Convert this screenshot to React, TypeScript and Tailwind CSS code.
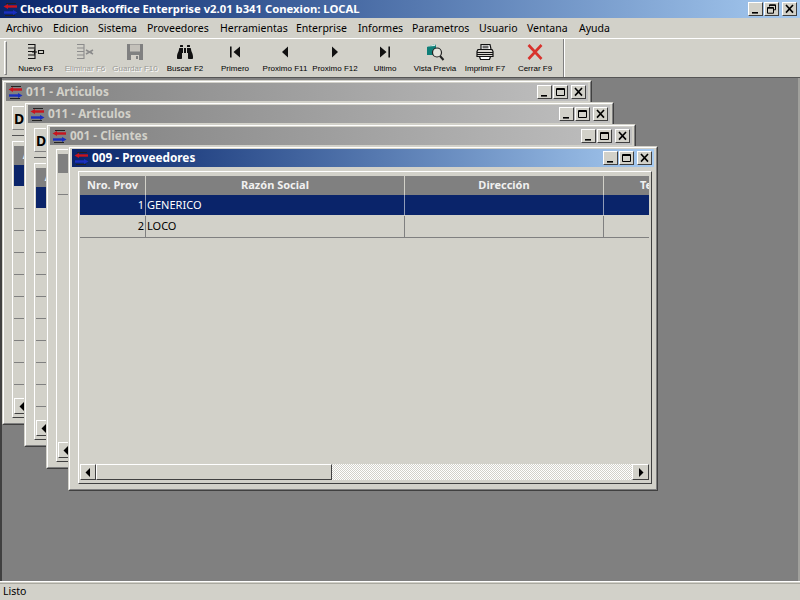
import React from 'react';
import { FaBinoculars } from 'react-icons/fa';

const raised = 'border border-t-white border-l-white border-r-[#404040] border-b-[#404040] bg-[#d2d1c9]';

function AppIcon() {
  return (
    <svg width="15" height="13" viewBox="0 0 15 13" className="shrink-0">
      <path d="M3 0.500h10M2 12.500h10" stroke="#222" strokeWidth="1" />
      <path d="M4 3.500h10" stroke="#c8141e" strokeWidth="2.400" />
      <path d="M5 1v5L0.500 3.500z" fill="#c8141e" />
      <path d="M1 9.500h10" stroke="#1a2fc0" strokeWidth="2.400" />
      <path d="M10 7v5l4.500-2.500z" fill="#1a2fc0" />
    </svg>
  );
}

function CtlGlyph({ kind }: { kind: string }) {
  return (
    <svg width="11" height="10" viewBox="0 0 11 10">
      {kind === 'min' && <path d="M2 8h6v1.600H2z" fill="#000" />}
      {kind === 'max' && <path d="M1.500 1.500h8v7h-8zM1.500 2.500h8" fill="none" stroke="#000" />}
      {kind === 'restore' && <path d="M3.500 2.500V.8h6v5H8M1.500 3.500h6v5.700h-6zM1.500 4.200h6M3.500 1.400h6" fill="none" stroke="#000" />}
      {kind === 'close' && <path d="M2 1l7 7.600M9 1L2 8.600" fill="none" stroke="#000" strokeWidth="1.600" />}
    </svg>
  );
}

function Ctl({ kind, gap }: { kind: string; gap: string }) {
  return (
    <div className={`${raised} ${gap} flex h-[14px] w-[15px] shrink-0 items-center justify-center`}>
      <CtlGlyph kind={kind} />
    </div>
  );
}

// iconos de la barra, dibujados a mano en 20x18
function Tree({ color, del }: { color: string; del?: boolean }) {
  return (
    <svg width="20" height="18" viewBox="0 0 20 18">
      <path d="M2 1.500h7v14H2M2 5h7M2 8.500h7M2 12h7" fill="none" stroke={color} strokeWidth="1.100" />
      {del ? (
        <path d="M11 7l7 4M11 11l7-4M13 9h4" fill="none" stroke={color} strokeWidth="1.500" />
      ) : (
        <path d="M6 9h5M8.500 6.500v5M12.500 7.500h5v3h-5z" fill="none" stroke={color} strokeWidth="1.100" />
      )}
    </svg>
  );
}

function Floppy() {
  return (
    <svg width="20" height="18" viewBox="0 0 20 18">
      <path d="M2 1h16v16H2z" fill="#808080" />
      <path d="M5 1.500h10v7H5z" fill="#c4c1ba" />
      <path d="M6 12h8v5H6z" fill="#d4d0c8" />
      <path d="M11 13h2v3h-2z" fill="#808080" />
    </svg>
  );
}

function Nav({ kind }: { kind: string }) {
  return (
    <svg width="20" height="18" viewBox="0 0 20 18">
      {kind === 'first' && <path d="M5 3.500h1.600v11H5zM15 3.500v11L8.500 9z" fill="#111" />}
      {kind === 'prev' && <path d="M13 3.500v11L7 9z" fill="#111" />}
      {kind === 'next' && <path d="M7 3.500v11L13 9z" fill="#111" />}
      {kind === 'last' && <path d="M5 3.500v11L11.500 9zM13.400 3.500H15v11h-1.600z" fill="#111" />}
    </svg>
  );
}

function Preview() {
  return (
    <svg width="20" height="18" viewBox="0 0 20 18">
      <path d="M2 4l8-3 1 2v9H2z" fill="#0f7f78" />
      <path d="M3 3.500l7-2.500v2z" fill="#d8e8e4" />
      <circle cx="12" cy="9.500" r="4.500" fill="#e4e4dc" stroke="#222" strokeWidth="1.200" />
      <path d="M15 13l3.500 4" stroke="#222" strokeWidth="2" />
    </svg>
  );
}

function Printer() {
  return (
    <svg width="20" height="18" viewBox="0 0 20 18">
      <path d="M6 6V1.500h9L16 6" fill="#fff" stroke="#111" strokeWidth="1.200" />
      <path d="M7.500 3.200h6M7.500 4.800h6" stroke="#111" strokeWidth="0.900" />
      <path d="M3 6.500h14l1 2v5H2v-5z" fill="#d8d5ce" stroke="#111" strokeWidth="1.200" />
      <path d="M2 9.500h16M2 11.500h16" stroke="#111" strokeWidth="1" />
      <path d="M4.500 13.500h11l-1 3h-9z" fill="#fff" stroke="#111" strokeWidth="1.200" />
    </svg>
  );
}

function CloseX() {
  return (
    <svg width="20" height="18" viewBox="0 0 20 18">
      <path d="M3.500 2l13 14M16.500 2l-13 14" stroke="#d8322c" strokeWidth="2.600" fill="none" />
    </svg>
  );
}

const tools = [
  { label: 'Nuevo F3', icon: <Tree color="#111" />, w: 'w-[49px]' },
  { label: 'Eliminar F6', icon: <Tree color="#8c8c8c" del />, off: true, w: 'w-[50px]' },
  { label: 'Guardar F10', icon: <Floppy />, off: true, w: 'w-[50px]' },
  { label: 'Buscar F2', icon: <FaBinoculars size={16} color="#111" />, w: 'w-[50px]' },
  { label: 'Primero', icon: <Nav kind="first" />, w: 'w-[50px]' },
  { label: 'Proximo F11', icon: <Nav kind="prev" />, w: 'w-[50px]' },
  { label: 'Proximo F12', icon: <Nav kind="next" />, w: 'w-[50px]' },
  { label: 'Ultimo', icon: <Nav kind="last" />, w: 'w-[50px]' },
  { label: 'Vista Previa', icon: <Preview />, w: 'w-[50px]' },
  { label: 'Imprimir F7', icon: <Printer />, w: 'w-[50px]' },
  { label: 'Cerrar F9', icon: <CloseX />, w: 'w-[50px]' },
];

const menus = [
  { label: 'Archivo', w: 'w-[47px]' },
  { label: 'Edicion', w: 'w-[45px]' },
  { label: 'Sistema', w: 'w-[49px]' },
  { label: 'Proveedores', w: 'w-[73px]' },
  { label: 'Herramientas', w: 'w-[76px]' },
  { label: 'Enterprise', w: 'w-[62px]' },
  { label: 'Informes', w: 'w-[54px]' },
  { label: 'Parametros', w: 'w-[67px]' },
  { label: 'Usuario', w: 'w-[48px]' },
  { label: 'Ventana', w: 'w-[52px]' },
  { label: 'Ayuda', w: 'w-[40px]' },
];

interface Col {
  label: string;
  w: string;
  align: string;
}

const provCols: Col[] = [
  { label: 'Nro. Prov', w: 'w-[66px]', align: 'text-right pr-[1px]' },
  { label: 'Razón Social', w: 'w-[259px]', align: 'text-left pl-[1px]' },
  { label: 'Dirección', w: 'w-[199px]', align: 'text-left' },
  { label: 'Teléfono', w: 'w-[120px]', align: 'text-left' },
];

const artCols: Col[] = [
  { label: 'Articulo', w: 'w-[62px]', align: 'text-left' },
  { label: 'Descripcion', w: 'w-[300px]', align: 'text-left' },
];

const cliCols: Col[] = [
  { label: 'Nro. Cliente', w: 'w-[100px]', align: 'text-left' },
  { label: 'Nombre', w: 'w-[300px]', align: 'text-left' },
];

function Arrow({ dir }: { dir: 'left' | 'right' }) {
  return (
    <svg width="6" height="9" viewBox="0 0 6 9">
      <path d={dir === 'left' ? 'M5 0v9L0.500 4.500z' : 'M1 0v9l4.500-4.500z'} fill="#000" />
    </svg>
  );
}

function HScroll() {
  return (
    <div className="flex h-[16px] shrink-0">
      <div className={`${raised} flex w-[16px] items-center justify-center`}>
        <Arrow dir="left" />
      </div>
      <div className={`${raised} w-[236px]`} />
      <div className="flex-1 bg-[repeating-conic-gradient(#ffffff_0_25%,#d2d1c9_0_50%)] bg-[length:2px_2px]" />
      <div className={`${raised} flex w-[17px] items-center justify-center`}>
        <Arrow dir="right" />
      </div>
    </div>
  );
}

function Grid({ cols, rows, selected, firstRow }: { cols: Col[]; rows: string[][]; selected: number; firstRow: string }) {
  return (
    <div className="min-h-0 flex-1 overflow-hidden">
      <div className="flex h-[19px] bg-[#808080] text-[11px] font-bold text-[#f0f0f0]">
        {cols.map((c) => (
          <div key={c.label} className={`${c.w} shrink-0 overflow-hidden border-r border-r-[#d2d1c9] text-center leading-[18px] whitespace-nowrap`}>
            {c.label}
          </div>
        ))}
      </div>
      {rows.map((r, i) => (
        <div
          key={i}
          className={`flex ${i === 0 ? firstRow : 'h-[22px]'} border-b ${i === selected ? 'border-b-[#d2d1c9] bg-[#0a246a] text-white' : 'border-b-[#808080] text-black'}`}
        >
          {cols.map((c, j) => (
            <div
              key={c.label}
              className={`${c.w} ${c.align} shrink-0 border-r text-[11px] leading-[20px] ${i === selected ? 'border-r-[#8f9bb8]' : 'border-r-[#808080]'}`}
            >
              {r[j]}
            </div>
          ))}
        </div>
      ))}
    </div>
  );
}

function ChildWindow({
  pos,
  title,
  active,
  filter,
  cols,
  rows,
  selected,
  firstRow,
}: {
  pos: string;
  title: string;
  active?: boolean;
  filter?: boolean;
  cols: Col[];
  rows: string[][];
  selected: number;
  firstRow: string;
}) {
  return (
    <div className={`absolute ${pos} h-[345px] w-[590px] border border-[#d2d1c9] border-r-[#404040] border-b-[#404040] bg-[#d2d1c9]`}>
      <div className="flex h-full flex-col border border-white border-r-[#808080] border-b-[#808080] px-[2px] pt-[1px] pb-[1px]">
        <div
          className={`flex h-[18px] shrink-0 items-center pr-[2px] pl-[2px] bg-linear-to-r ${active ? 'from-[#0a246a] to-[#a6caf0] text-white' : 'from-[#808080] to-[#c0c0c0] text-[#d2d1c9]'}`}
        >
          <AppIcon />
          <span className="ml-[3px] flex-1 text-[11.800px] font-bold">{title}</span>
          <Ctl kind="min" gap="ml-0" />
          <Ctl kind="max" gap="ml-[1px]" />
          <Ctl kind="close" gap="ml-[3px]" />
        </div>
        {filter && (
          <div className="mt-[5px] flex h-[35px] shrink-0 flex-col pl-[6px]">
            <div className="h-[24px] w-[120px] border border-t-white border-l-white border-r-[#808080] border-b-[#808080] pl-[1px] text-[14px] leading-[24px] font-bold text-black">
              Dp
            </div>
            <div className="mt-[5px] h-[1px] w-[200px] bg-[#555555]" />
          </div>
        )}
        <div className={`mr-[2px] mb-[4px] ml-[6px] flex min-h-0 flex-1 flex-col border border-t-white border-l-white border-r-[#404040] border-b-[#404040] pt-[4px] pr-[2px] pb-[3px] pl-[1px] ${filter ? 'mt-0' : 'mt-[4px]'}`}>
          <Grid cols={cols} rows={rows} selected={selected} firstRow={firstRow} />
          <HScroll />
        </div>
      </div>
    </div>
  );
}

const blank = Array.from({ length: 10 }, () => ['', '']);

export default function App() {
  return (
    <div className="flex h-[600px] w-[800px] flex-col overflow-hidden bg-[#d2d1c9] font-['Noto_Sans','Liberation_Sans',sans-serif] text-black">
      {/* barra de titulo */}
      <div className="flex h-[18px] shrink-0 items-center bg-linear-to-r from-[#0a246a] to-[#a6caf0] pr-[3px] pl-[3px]">
        <AppIcon />
        <span className="ml-[2px] flex-1 text-[11.270px] font-bold text-white">CheckOUT Backoffice Enterprise v2.01 b341 Conexion: LOCAL</span>
        <Ctl kind="min" gap="ml-0" />
        <Ctl kind="restore" gap="ml-[1px]" />
        <Ctl kind="close" gap="ml-[3px]" />
      </div>

      {/* menu */}
      <div className="flex h-[20px] shrink-0 items-center pt-[2px] pl-[6px] text-[10.500px]">
        {menus.map((m) => (
          <span key={m.label} className={`${m.w} shrink-0`}>
            {m.label}
          </span>
        ))}
      </div>

      {/* toolbar */}
      <div className="flex h-[40px] shrink-0 border-t border-t-white border-b border-b-[#555555]">
        <div className="mt-[2px] mb-[2px] ml-[4px] h-[34px] w-[3px] border border-t-white border-l-white border-r-[#808080] border-b-[#808080]" />
        <div className="flex pl-[4px]">
          {tools.map((t) => (
            <div key={t.label} className={`flex ${t.w} flex-col items-center pt-[4px]`}>
              <div className="flex h-[18px] items-center justify-center">{t.icon}</div>
              <span
                className={`mt-[2px] font-['Liberation_Sans',sans-serif] text-[8px] leading-[11px] font-medium whitespace-nowrap ${t.off ? 'text-[#9a9a96] [text-shadow:1px_1px_0_#ffffff]' : 'text-black'}`}
              >
                {t.label}
              </span>
            </div>
          ))}
        </div>
        <div className="ml-[3px] w-[1px] bg-[#808080]" />
        <div className="w-[1px] bg-white" />
      </div>

      {/* area MDI */}
      <div className="relative min-h-0 flex-1 border-r-2 border-l-2 border-r-[#a0a09c] border-l-[#404040] bg-[#808080]">
        <ChildWindow pos="left-0 top-[2px]" title="011 - Articulos" filter cols={artCols} rows={blank} selected={0} firstRow="h-[22px]" />
        <ChildWindow pos="left-[22px] top-[24px]" title="011 - Articulos" filter cols={artCols} rows={blank} selected={0} firstRow="h-[22px]" />
        <ChildWindow pos="left-[44px] top-[46px]" title="001 - Clientes" cols={cliCols} rows={[['', '']]} selected={-1} firstRow="h-[22px]" />
        <ChildWindow
          pos="left-[66px] top-[68px]"
          title="009 - Proveedores"
          active
          cols={provCols}
          rows={[
            ['1', 'GENERICO', '', ''],
            ['2', 'LOCO', '', ''],
          ]}
          selected={0}
          firstRow="h-[21px]"
        />
      </div>

      {/* status */}
      <div className="flex h-[19px] shrink-0 flex-col border-t border-t-white">
        <div className="mt-[1px] flex flex-1 items-center border-t border-t-[#a9a89f] pl-[3px] text-[10.500px] text-black">Listo</div>
      </div>
    </div>
  );
}
